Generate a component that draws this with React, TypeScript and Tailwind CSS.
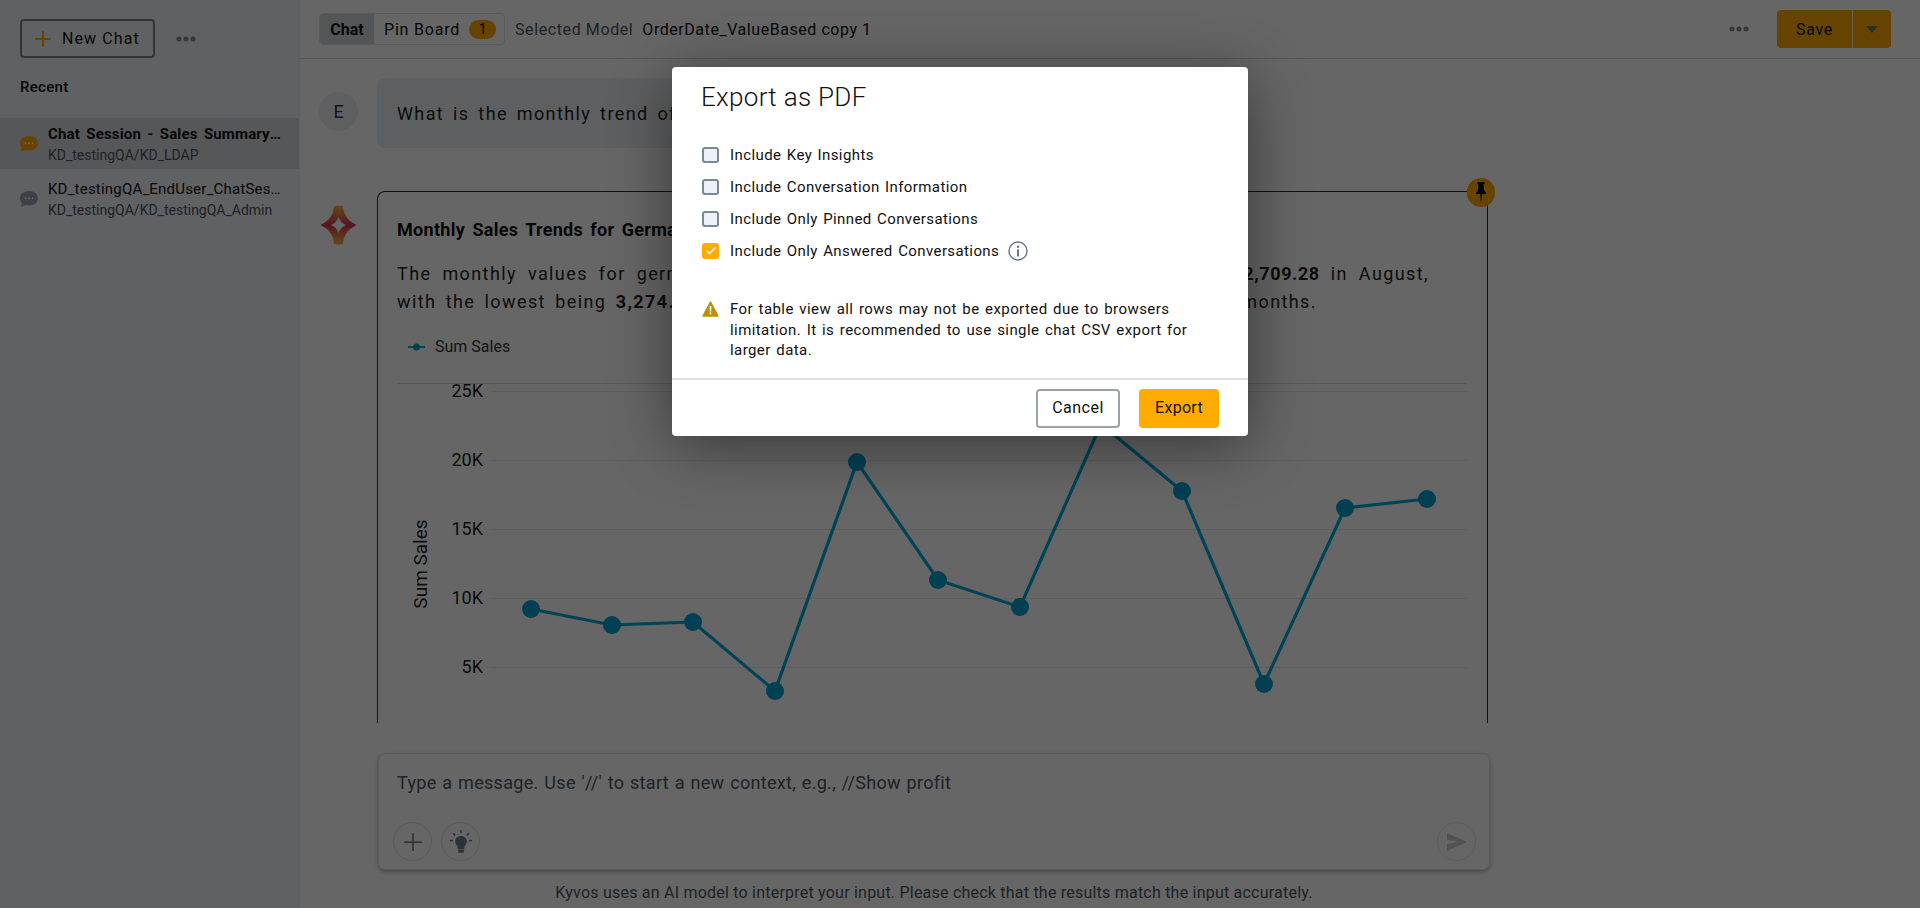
import { Plus, Ellipsis, Check } from 'lucide-react'

const points = [
  [531, 609], [612, 625], [693, 622], [775, 691], [857, 462], [938, 580],
  [1020, 607], [1101, 424], [1182, 491], [1264, 684], [1345, 508], [1427, 499],
]
const ticks = [
  { label: '25K', y: 391 }, { label: '20K', y: 460 }, { label: '15K', y: 529 },
  { label: '10K', y: 598 }, { label: '5K', y: 667 },
]

function Chart() {
  // svg origin sits at the page position (378, 357)
  const ox = 378
  const oy = 357
  return (
    <svg width="1108" height="366" className="block shrink-0">
      <line x1={397 - ox} x2={1467 - ox} y1={26.5} y2={26.5} stroke="#d8dadc" />
      {ticks.map((t) => (
        <g key={t.label}>
          <line x1={491 - ox} x2={1467 - ox} y1={t.y - oy + 0.5} y2={t.y - oy + 0.5} stroke="#e9eaeb" />
          <text x={483 - ox} y={t.y - oy + 6} textAnchor="end" fontSize="18" fill="#222">{t.label}</text>
        </g>
      ))}
      <text transform={`translate(${427 - ox} ${564 - oy}) rotate(-90)`} textAnchor="middle" fontSize="19" fill="#222">Sum Sales</text>
      <polyline
        points={points.map(([x, y]) => `${x - ox},${y - oy}`).join(' ')}
        fill="none"
        stroke="#00a8d8"
        strokeWidth="3.2"
      />
      {points.map(([x, y]) => (
        <circle key={x} cx={x - ox} cy={y - oy} r="9" fill="#00a0ce" />
      ))}
    </svg>
  )
}

function BubbleIcon({ color }: { color: string }) {
  return (
    <svg width="18" height="16" viewBox="0 0 18 16" className="shrink-0">
      <path d="M9 0C14 0 18 3 18 7.2C18 11.4 14 14.4 9 14.4C7.8 14.4 6.7 14.2 5.7 13.9L1 16L1.8 12C0.7 10.7 0 9.1 0 7.2C0 3 4 0 9 0Z" fill={color} />
      <circle cx="5.5" cy="7.2" r="1" fill="#fff" />
      <circle cx="9" cy="7.2" r="1" fill="#fff" />
      <circle cx="12.5" cy="7.2" r="1" fill="#fff" />
    </svg>
  )
}

function ChatItem({ title, sub, active }: { title: string; sub: string; active?: boolean }) {
  return (
    <div className={`flex items-center h-[51px] pl-5 ${active ? 'bg-[#d6dadf]' : ''}`}>
      <BubbleIcon color={active ? '#ffab00' : '#9aa3ae'} />
      <div className="ml-[10px] min-w-0 w-[238px]">
        <div className={`truncate text-[15px] leading-[20px] text-[#111] ${active ? 'font-bold tracking-[0.15px] [word-spacing:2.5px]' : 'tracking-[0.2px]'}`}>{title}</div>
        <div className="truncate text-[14px] leading-[18px] mt-[2px] text-[#4b5563]">{sub}</div>
      </div>
    </div>
  )
}

export default function App() {
  return (
    <div className="relative flex h-[908px] w-[1920px] overflow-hidden bg-white font-['Roboto',sans-serif] text-[#111]">
      {/* Sidebar */}
      <aside className="w-[300px] shrink-0 bg-[#f0f2f5] border-r border-[#eceef0]">
        <div className="flex items-center pt-[19px] pl-5">
          <button className="flex items-center h-[39px] w-[135px] rounded border-2 border-[#7a8794] bg-[#f0f2f5] pl-[9px] text-[16px] tracking-[1.1px]">
            <Plus className="w-[24px] h-[24px] text-[#ffab00] mr-[7px]" strokeWidth={2} />
            New Chat
          </button>
          <Ellipsis className="ml-[19px] w-[24px] h-[24px] text-[#7a8794]" strokeWidth={3} />
        </div>
        <div className="mt-[19px] ml-5 text-[15px] font-medium leading-[20px] tracking-[0.3px]">Recent</div>
        <div className="mt-[21px] flex flex-col gap-[4px]">
          <ChatItem active title="Chat Session - Sales Summary Report" sub="KD_testingQA/KD_LDAP" />
          <ChatItem title="KD_testingQA_EndUser_ChatSession_01" sub="KD_testingQA/KD_testingQA_Admin" />
        </div>
      </aside>

      {/* Main */}
      <main className="flex-1 flex flex-col min-w-0">
        <header className="h-[59px] shrink-0 flex items-center border-b border-[#d4d7da] pl-[19px] pr-[29px]">
          <div className="flex items-center h-[32px] w-[186px] border border-[#dfe2e5] rounded text-[16px]">
            <div className="h-full w-[54px] flex items-center justify-center bg-[#d0d4d9] font-bold rounded-l pt-px">Chat</div>
            <div className="ml-[10px] tracking-[0.8px] pt-px">Pin Board</div>
            <div className="ml-[9px] w-[27px] h-[19px] rounded-full bg-[#ffab00] flex items-center justify-center text-[14px]">1</div>
          </div>
          <div className="ml-[10px] text-[16px] text-[#4b5563] tracking-[0.6px] pt-px">Selected Model</div>
          <div className="ml-[9px] text-[16px] tracking-[0.55px] pt-px">OrderDate_ValueBased copy 1</div>
          <Ellipsis className="ml-auto w-[24px] h-[24px] text-[#7a8794]" strokeWidth={3} />
          <div className="ml-[26px] flex h-[38px] w-[114px] rounded bg-[#ffab00] text-[16px]">
            <div className="w-[76px] flex items-center justify-center border-r border-[#fff3d6] tracking-[0.7px] pt-px">Save</div>
            <div className="flex-1 flex items-center justify-center">
              <div className="w-0 h-0 border-x-[6px] border-x-transparent border-t-[7px] border-t-[#6b7280]" />
            </div>
          </div>
        </header>

        <div className="ml-[19px] w-[1180px] flex flex-col">
          <div className="h-[664px] overflow-hidden pt-[19px]">
            <div className="flex">
              <div className="mt-[14px] w-[39px] h-[39px] rounded-full bg-[#eceef0] flex items-center justify-center text-[18px] text-[#333]">E</div>
              <div className="ml-[19px] w-[760px] h-[70px] rounded-lg bg-[#eceef0] flex items-center pl-[20px] text-[18px] tracking-[1.4px] [word-spacing:3px] text-[#222]">
                What is the monthly trend of sum sales in Germany?
              </div>
            </div>
            <div className="flex mt-[43px]">
              <svg width="39" height="40" viewBox="0 0 39 40" className="mt-[14px] shrink-0">
                <defs>
                  <linearGradient id="logoGrad" x1="0" y1="0" x2="0" y2="1">
                    <stop offset="0" stopColor="#ffb24a" />
                    <stop offset="0.35" stopColor="#e0604a" />
                    <stop offset="0.5" stopColor="#cf3550" />
                    <stop offset="0.65" stopColor="#e0604a" />
                    <stop offset="1" stopColor="#ffb24a" />
                  </linearGradient>
                </defs>
                <path
                  fillRule="evenodd"
                  fill="url(#logoGrad)"
                  d="M15 1Q19.5 0 24 1C24.5 10 29 15.5 37.5 20C29 24.5 24.5 30 24 39Q19.5 40 15 39C14.5 30 10 24.5 1.5 20C10 15.5 14.5 10 15 1ZM19.5 12C21 16 23.5 18.5 27 20C23.5 21.5 21 24 19.5 28C18 24 15.5 21.5 12 20C15.5 18.5 18 16 19.5 12Z"
                />
              </svg>
              <div className="relative ml-[19px] w-[1111px] h-[600px] border-x border-t border-[#2b2f36] rounded-t-lg">
                <div className="absolute -top-[14px] -right-[8px] w-[28px] h-[29px] rounded-full bg-[#ffab00] flex items-center justify-center">
                  <svg width="10" height="21" viewBox="0 0 10 21">
                    <path d="M1.5 0H8.5V1.6L7.4 2.6L8 8.5L10 11V12H5.8L5 21L4.2 12H0V11L2 8.5L2.6 2.6L1.5 1.6Z" fill="#000" />
                  </svg>
                </div>
                <div className="pt-[28px] pl-[19px] text-[18px] font-bold leading-[20px] tracking-[0.3px] [word-spacing:2.5px]">Monthly Sales Trends for Germany</div>
                <p className="mt-[20px] ml-[19px] w-[1032px] text-[18px] leading-[28px] text-justify tracking-[1.4px] [word-spacing:3.5px] text-[#222]">
                  The monthly values for german sales fluctuate through the year, the highest being <b className="tracking-[0.6px]">22,709.28</b> in August, with the lowest being <b>3,274.10</b> in April, while sales recovered during those remaining months.
                </p>
                <div className="mt-[21px] ml-[30px] flex items-center h-[20px] text-[16px] text-[#333]">
                  <svg width="17" height="8" className="mr-[10px]">
                    <line x1="0" x2="17" y1="4" y2="4" stroke="#00a8d8" strokeWidth="2" />
                    <circle cx="8.5" cy="4" r="3.5" fill="#00a0ce" />
                  </svg>
                  Sum Sales
                </div>
                <Chart />
              </div>
            </div>
          </div>

          <div className="mt-[30px] ml-[59px] h-[117px] w-[1112px] rounded-lg border border-[#e1e3e6] shadow-[0_2px_4px_rgba(0,0,0,0.3)] flex flex-col">
            <div className="pt-[18px] pl-[18px] text-[18px] leading-[22px] tracking-[0.3px] [word-spacing:1px] text-[#4b5563]">Type a message. Use '//' to start a new context, e.g., //Show profit</div>
            <div className="mt-auto mb-[8px] flex items-center pl-[14px] pr-[13px] gap-[9px]">
              <div className="w-[39px] h-[39px] rounded-full border border-[#dfe2e5] flex items-center justify-center">
                <Plus className="w-[28px] h-[28px] text-[#7a8794]" strokeWidth={1.5} />
              </div>
              <div className="w-[39px] h-[39px] rounded-full border border-[#dfe2e5] flex items-center justify-center">
                <svg width="22" height="24" viewBox="0 0 22 24" fill="#6b7d91">
                  <path d="M11 6C14.5 6 16.8 8.4 16.8 11.4C16.8 13.4 15.6 14.8 14.6 16L14.2 19H7.8L7.4 16C6.4 14.8 5.2 13.4 5.2 11.4C5.2 8.4 7.5 6 11 6Z" />
                  <rect x="8.2" y="19.6" width="5.6" height="3.2" rx="0.6" />
                  <rect x="10.2" y="0" width="1.6" height="3" />
                  <rect x="3.4" y="2.8" width="1.6" height="3" transform="rotate(-40 4.2 4.3)" />
                  <rect x="17" y="2.8" width="1.6" height="3" transform="rotate(40 17.8 4.3)" />
                  <rect x="0" y="9.8" width="3" height="1.6" />
                  <rect x="19" y="9.8" width="3" height="1.6" />
                </svg>
              </div>
              <div className="ml-auto w-[39px] h-[39px] rounded-full border border-[#e6e8ea] flex items-center justify-center">
                <svg width="20" height="18" viewBox="0 0 20 18">
                  <path d="M0 0L20 9L0 18V11L12 9L0 7Z" fill="#c8ccd0" />
                </svg>
              </div>
            </div>
          </div>
          <div className="mt-[13px] ml-[59px] w-[1112px] text-center text-[16px] leading-[20px] text-[#4b5563] tracking-[0.22px]">
            Kyvos uses an AI model to interpret your input. Please check that the results match the input accurately.
          </div>
        </div>
      </main>

      {/* Export dialog */}
      <div className="absolute inset-0 bg-black/60 flex justify-center items-start pt-[67px]">
        <div className="w-[576px] h-[369px] bg-white rounded shadow-[0_10px_60px_rgba(0,0,0,0.45)] flex flex-col">
          <div className="pl-[29px] pt-[13px] text-[26px] leading-[34px] font-light tracking-[0.3px] text-[#111]">Export as PDF</div>
          <div className="pl-[30px] mt-[31px] flex flex-col gap-[12px] text-[15px] leading-[20px] tracking-[0.4px] [word-spacing:1.3px] text-[#111]">
            {['Include Key Insights', 'Include Conversation Information', 'Include Only Pinned Conversations'].map((label) => (
              <div key={label} className="flex items-center h-[20px]">
                <span className="w-[17px] h-[16px] rounded-[3px] border-2 border-[#7a8794] bg-[#eef0f3]" />
                <span className="ml-[11px]">{label}</span>
              </div>
            ))}
            <div className="flex items-center h-[20px]">
              <span className="w-[17px] h-[16px] rounded-[3px] bg-[#ffab00] flex items-center justify-center">
                <Check className="w-[12px] h-[12px] text-white" strokeWidth={3} />
              </span>
              <span className="ml-[11px]">Include Only Answered Conversations</span>
              <svg width="20" height="20" viewBox="0 0 20 20" className="ml-[9px]">
                <circle cx="10" cy="10" r="9" fill="none" stroke="#6b7785" strokeWidth="1.4" />
                <rect x="9" y="8.4" width="2" height="7" fill="#6b7785" />
                <circle cx="10" cy="5.8" r="1.2" fill="#6b7785" />
              </svg>
            </div>
          </div>
          <div className="flex pl-[30px] mt-[38px] w-[540px]">
            <svg width="17" height="16" viewBox="0 0 17 16" className="mt-[2px] shrink-0">
              <path d="M8.5 1L16 15H1Z" fill="#b8920a" stroke="#b8920a" strokeWidth="1.5" strokeLinejoin="round" />
              <rect x="7.7" y="5" width="1.6" height="5.5" fill="#fff" />
              <rect x="7.7" y="11.5" width="1.6" height="1.8" fill="#fff" />
            </svg>
            <p className="ml-[11px] text-[15px] leading-[20.5px] tracking-[0.42px] [word-spacing:1.4px] text-[#111]">
              For table view all rows may not be exported due to browsers limitation. It is recommended to use single chat CSV export for larger data.
            </p>
          </div>
          <div className="mt-auto h-[58px] border-t-2 border-[#dfe1e3] flex items-center justify-end pr-[29px] gap-[19px]">
            <button className="w-[84px] h-[39px] rounded border-2 border-[#9aa1a9] text-[16px] tracking-[0.5px]">Cancel</button>
            <button className="w-[80px] h-[39px] rounded bg-[#ffab00] text-[16px] tracking-[0.3px]">Export</button>
          </div>
        </div>
      </div>
    </div>
  )
}
